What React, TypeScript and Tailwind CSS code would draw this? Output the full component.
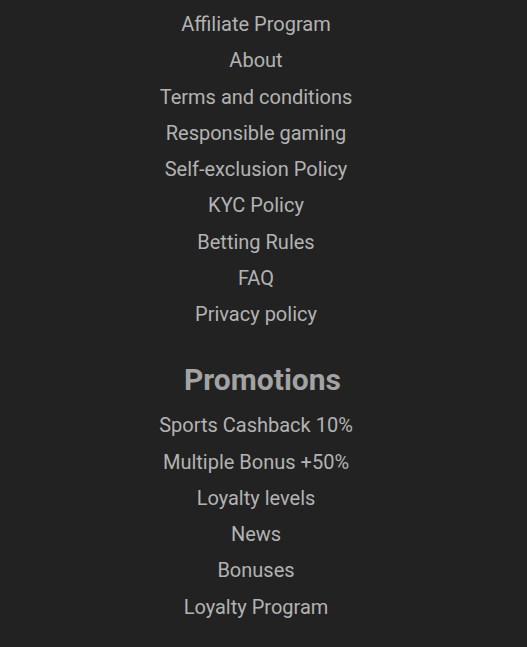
const companyLinks = [
  'Affiliate Program',
  'About',
  'Terms and conditions',
  'Responsible gaming',
  'Self-exclusion Policy',
  'KYC Policy',
  'Betting Rules',
  'FAQ',
  'Privacy policy',
];

const promoLinks = [
  'Sports Cashback 10%',
  'Multiple Bonus +50%',
  'Loyalty levels',
  'News',
  'Bonuses',
  'Loyalty Program',
];

export default function App() {
  return (
    <div
      className="min-h-[647px] w-full bg-[#222222] pt-[6px] text-[#b3b3b3]"
      style={{ fontFamily: 'Roboto, "Liberation Sans", sans-serif' }}
    >
      <ul className="flex flex-col items-center pr-[15px]">
        {companyLinks.map(link => (
          <li key={link} className="h-[36.25px] text-[20px] leading-[36.25px]">
            <a href="#">{link}</a>
          </li>
        ))}
      </ul>

      <h3 className="mt-[30px] mb-[9px] h-[36px] pr-[2px] text-center text-[30px] font-bold leading-[36px] text-[#a3a3a3]">
        Promotions
      </h3>

      <ul className="flex flex-col items-center pr-[15px]">
        {promoLinks.map(link => (
          <li key={link} className="h-[36.25px] text-[20px] leading-[36.25px]">
            <a href="#">{link}</a>
          </li>
        ))}
      </ul>
    </div>
  );
}
